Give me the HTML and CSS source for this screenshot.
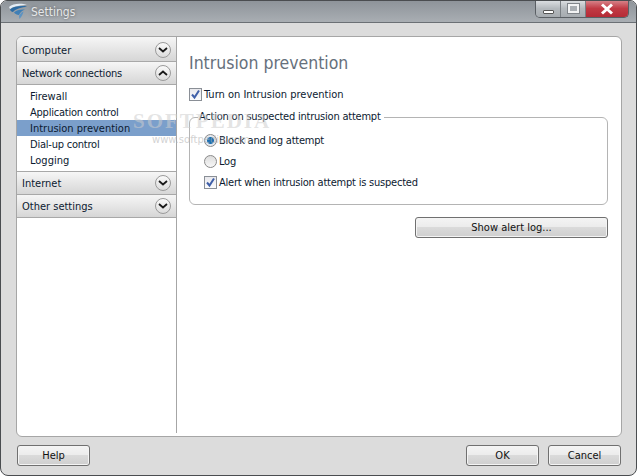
FILE: index.html
```html
<!DOCTYPE html>
<html>
<head>
<meta charset="utf-8">
<title>Settings</title>
<link rel="stylesheet" href="styles.css">
</head>
<body>
<div class="window">
  <header class="titlebar">
    <svg class="logo" width="20" height="17" viewBox="0 0 20 17">
      <path d="M1 4 C5 0 14 0 19 2 C14 2 6 3 2 6 Z" fill="#e4edf5"/>
      <path d="M2 6.500 C6 3 14 2.500 19 3.500 C14 4.500 8 5.500 5 9 C3.500 9 2.500 8 2 6.500 Z" fill="#2c6ba3"/>
      <path d="M6 9.500 C8 7 13 6 17 6.500 C14 7.500 12 9.500 11 12 C9 12 7 11 6 9.500 Z" fill="#3f7fb6"/>
      <path d="M11 13 C12 11 13 9.500 15.500 8.500 C15 11 13.500 14 11.500 16 Z" fill="#5e93c2"/>
    </svg>
    <span class="title">Settings</span>
    <div class="controls">
      <div class="ctl ctl-min"><span class="min-glyph"></span></div>
      <div class="ctl ctl-max"><span class="max-glyph"></span></div>
      <div class="ctl ctl-close"><svg width="16" height="12" viewBox="0 0 16 12"><path d="M3 1.500 L13 10.500 M13 1.500 L3 10.500" stroke="#fff" stroke-width="3"/></svg></div>
    </div>
  </header>
  <div class="client">
    <div class="panel">
      <div class="watermark">SOFTPEDIA<small>www.softpedia.com</small></div>
      <nav class="sidebar">
        <div class="group group-first">Computer<span class="chev"><svg width="10" height="6" viewBox="0 0 10 6"><path d="M1 1 L5 4.500 L9 1" /></svg></span></div>
        <div class="group"><span class="tight">Network connections</span><span class="chev"><svg width="10" height="6" viewBox="0 0 10 6"><path d="M1 5 L5 1.500 L9 5" /></svg></span></div>
        <ul class="items">
          <li>Firewall</li>
          <li class="tight">Application control</li>
          <li class="selected">Intrusion prevention</li>
          <li class="tight">Dial-up control</li>
          <li>Logging</li>
        </ul>
        <div class="group group-top">Internet<span class="chev"><svg width="10" height="6" viewBox="0 0 10 6"><path d="M1 1 L5 4.500 L9 1" /></svg></span></div>
        <div class="group">Other settings<span class="chev"><svg width="10" height="6" viewBox="0 0 10 6"><path d="M1 1 L5 4.500 L9 1" /></svg></span></div>
      </nav>
      <main class="content">
        <h1>Intrusion prevention</h1>
        <label class="option top-option"><span class="check"><svg width="11" height="11" viewBox="0 0 11 11"><path d="M2 5.500 L4.500 8.500 L9 1.500"/></svg></span>Turn on Intrusion prevention</label>
        <fieldset class="box">
          <legend>Action on suspected intrusion attempt</legend>
          <label class="option"><span class="radio on"></span>Block and log attempt</label>
          <label class="option"><span class="radio"></span>Log</label>
          <label class="option"><span class="check"><svg width="11" height="11" viewBox="0 0 11 11"><path d="M2 5.500 L4.500 8.500 L9 1.500"/></svg></span>Alert when intrusion attempt is suspected</label>
        </fieldset>
        <div class="log-row"><button class="btn btn-log">Show alert log...</button></div>
      </main>
    </div>
    <footer class="footer">
      <button class="btn">Help</button>
      <span class="spacer"></span>
      <button class="btn btn-ok">OK</button>
      <button class="btn">Cancel</button>
    </footer>
  </div>
</div>
</body>
</html>
```

FILE: styles.css
```css
* { box-sizing: border-box; }
html, body { margin: 0; padding: 0; width: 637px; height: 476px; overflow: hidden; background: #fff; }
body { font-family: "DejaVu Sans", sans-serif; font-stretch: condensed; font-size: 11px; color: #0c1a30; }
.window {
  width: 637px; height: 476px; display: flex; flex-direction: column;
  border: 1px solid #4a4d50; border-radius: 7px 7px 8px 8px;
  background: #dcdcdc; overflow: hidden;
}
.titlebar {
  height: 22px; flex: none; display: flex; align-items: flex-start; position: relative;
  background: linear-gradient(#8e949a, #a9aeb3);
  border-bottom: 1px solid #6b7075;
}
.logo { margin: 2px 0 0 7px; }
.title { margin: 4px 0 0 3px; font-size: 12px; color: #e6e8ea; text-shadow: 0 0 3px #555; }
.controls { position: absolute; right: 7px; top: -1px; display: flex; height: 18px; border: 1px solid #5a5f64; border-top: 0; border-radius: 0 0 5px 5px; overflow: hidden; }
.ctl { display: flex; align-items: center; justify-content: center; border-right: 1px solid #7a7f84; }
.ctl-min, .ctl-max { width: 25px; background: linear-gradient(#dfe2e5, #b4b9bd 50%, #a6abb0); }
.ctl-close { width: 42px; border-right: 0; background: linear-gradient(#d98a90, #c13a44 50%, #b52b36); }
.min-glyph { width: 11px; height: 4px; margin-top: 6px; border: 1px solid #555; background: #fff; border-radius: 1px; }
.max-glyph { width: 11px; height: 9px; border: 2px solid #f2f3f4; outline: 1px solid #80858a; background: #a9aeb3; }
.client { flex: 1; display: flex; flex-direction: column; padding: 13px 14px 9px 15px; min-height: 0; }
.panel {
  flex: none; height: 401px; display: flex; position: relative; background: #fff;
  border: 1px solid #a6a6a6; border-radius: 6px; overflow: hidden;
}
.sidebar { width: 160px; flex: none; border-right: 1px solid #a6a6a6; margin-bottom: 3px; position: relative; }
.group {
  height: 23px; display: flex; align-items: center; justify-content: space-between;
  padding: 0 5px 0 5px; font-size: 11px;
  background: linear-gradient(#f6f6f6, #d6d6d6); border-bottom: 1px solid #a8a8a8;
}
.group-first { height: 25px; padding-top: 2px; }
.group-top { border-top: 1px solid #a8a8a8; height: 24px; }
.tight { letter-spacing: -0.220px; }
.chev {
  width: 16px; height: 16px; border-radius: 50%; border: 1px solid #9a9a9a; display: flex; align-items: center; justify-content: center;
  background: linear-gradient(#fafafa, #dcdcdc);
}
.chev path { fill: none; stroke: #1a1a1a; stroke-width: 1.800; }
.items { list-style: none; margin: 0; padding: 3px 0 3px; }
.items li { height: 16px; line-height: 15px; padding: 1px 0 0 13px; font-size: 11px; }
.items .selected { background: #7b9fcb; }
.content { flex: 1; padding: 14px 13px 0 12px; display: flex; flex-direction: column; position: relative; }
h1 { margin: 0 0 11px; font-size: 17.500px; font-weight: 400; color: #66707c; line-height: 24px; }
.option { display: flex; align-items: center; height: 21px; font-size: 11px; }
.top-option { height: 16px; }
.check { width: 13px; height: 13px; margin-right: 2px; border: 1px solid #8a8f96; background: linear-gradient(#e8e8ec, #fbfbfd); display: flex; }
.check path { fill: none; stroke: #3f5fa8; stroke-width: 2; }
.radio { width: 13px; height: 13px; margin-right: 2px; border-radius: 50%; border: 1px solid #8a8a8a; background: linear-gradient(#dcdcdc, #f8f8f8); }
.radio.on { background: radial-gradient(circle, #1d6fb0 0 3px, #e4e8ee 4px); }
.box { border: 1px solid #b4b4b4; border-radius: 6px; margin: 8px 0 0; padding: 6px 14px 3px 14px; height: 95px; min-width: 0; letter-spacing: -0.220px; }
.box legend { padding: 0 3px 0 1px; margin-left: -6px; font-size: 11px; line-height: 14px; }
.log-row { display: flex; justify-content: flex-end; margin-top: 12px; }
.btn {
  width: 73px; height: 21px; padding: 0; font: inherit; font-size: 11px; color: #111;
  border: 1px solid #707070; border-radius: 3px; box-shadow: inset 0 0 0 1px #f4f4f4;
  background: linear-gradient(#f4f4f4, #ececec 45%, #dadada 50%, #cfcfcf);
}
.btn-log { width: 193px; }
.watermark {
  position: absolute; left: 116px; top: 72px; width: 130px; color: rgba(205,205,205,0.55); font: 700 21px "Liberation Serif", serif; letter-spacing: 2px; pointer-events: none; z-index: 2;
}
.watermark small { display: block; color: rgba(180,180,180,0.6); font: 10px "DejaVu Sans", sans-serif; letter-spacing: 0; margin: 0 0 0 19px; }
.footer { flex: 1; display: flex; align-items: flex-start; padding: 8px 1px 0 1px; }
.spacer { flex: 1; }
.btn-ok { margin-right: 9px; }
```
